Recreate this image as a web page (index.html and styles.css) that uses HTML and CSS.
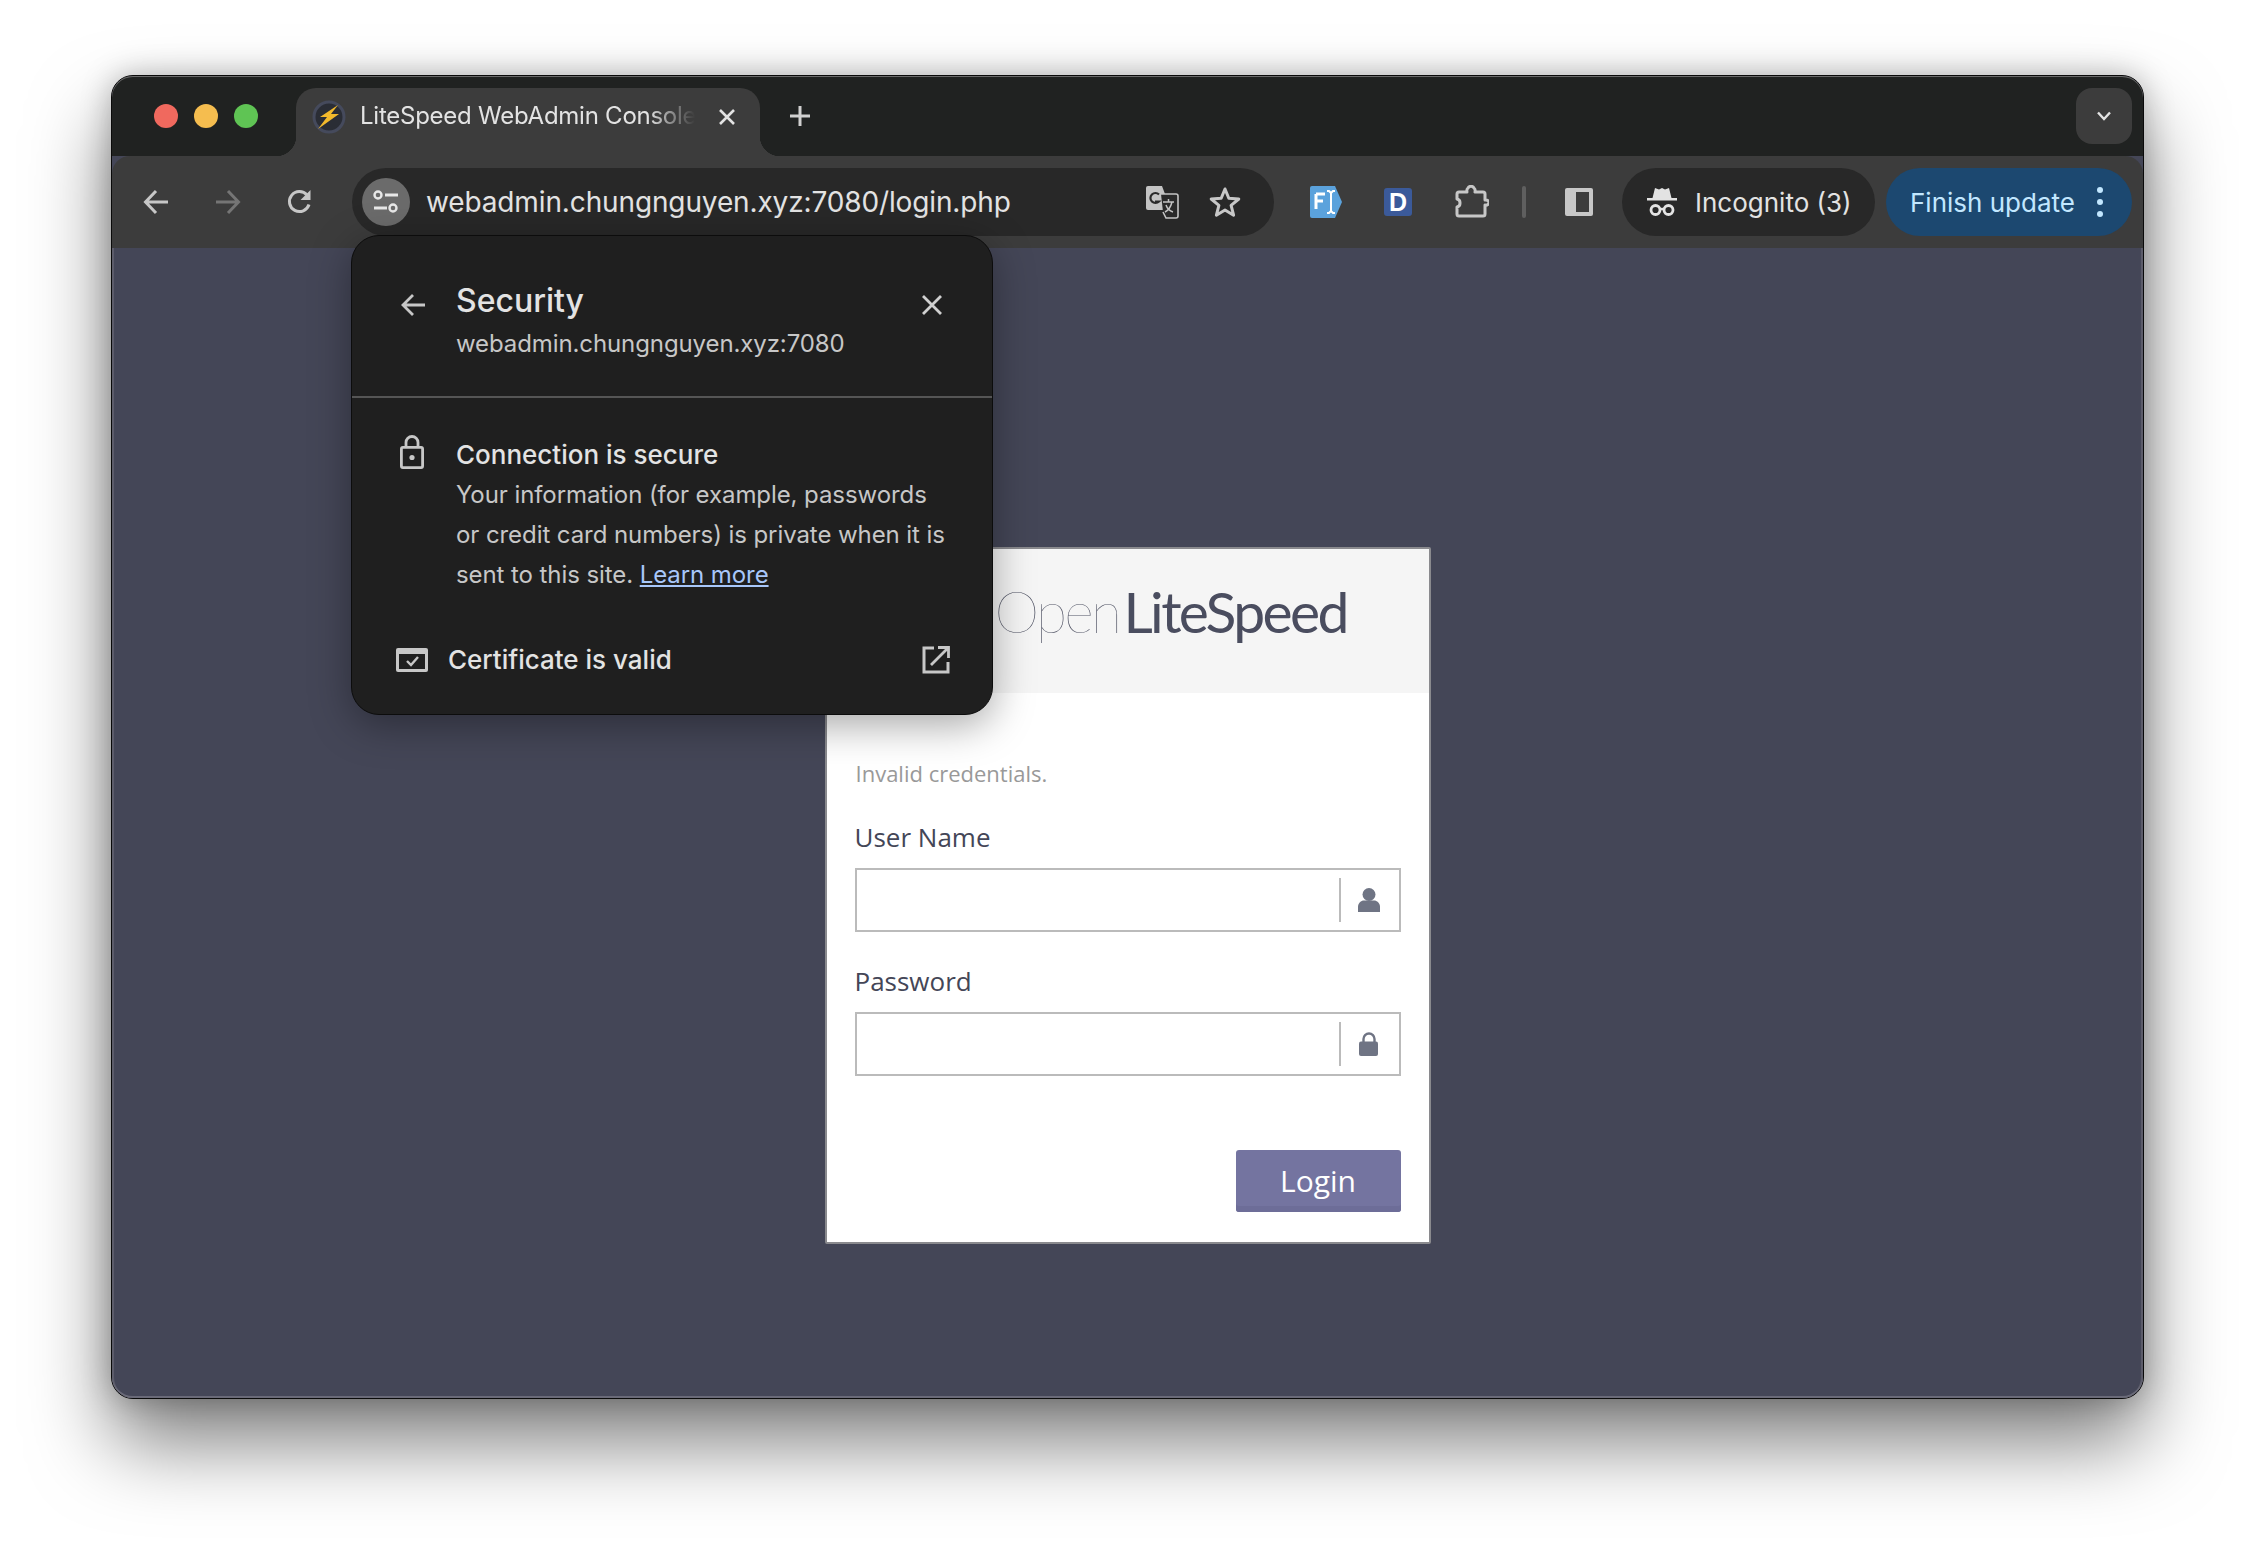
FILE: index.html
```html
<!DOCTYPE html>
<html lang="en">
<head>
<meta charset="utf-8">
<title>LiteSpeed WebAdmin Console</title>
<link rel="stylesheet" href="styles.css">
</head>
<body>
<div class="window">
  <header class="titlebar">
    <div class="lights"><span class="light red"></span><span class="light yellow"></span><span class="light green"></span></div>
    <div class="tab">
      <svg class="favicon" viewBox="0 0 34 34"><circle cx="17" cy="17" r="15" fill="#2a2d35" stroke="#454a5c" stroke-width="3"/><path d="M26 5 8 17h7L6 29l21-15h-8z" fill="#f2b92c"/></svg>
      <span class="tab-title">LiteSpeed WebAdmin Console</span>
      <svg class="tab-close" viewBox="0 0 18 18"><path d="M2 2l14 14M16 2 2 16" stroke="#e3e3e3" stroke-width="2.6" fill="none"/></svg>
    </div>
    <svg class="new-tab" viewBox="0 0 22 22"><path d="M11 1v20M1 11h20" stroke="#d0d0d0" stroke-width="3" fill="none"/></svg>
    <div class="tab-search"><svg viewBox="0 0 16 10" class="chev"><path d="M2 1.500l6 6.500 6-6.500" stroke="#e3e3e3" stroke-width="2.400" fill="none"/></svg></div>
  </header>
  <nav class="toolbar">
    <button class="tool first"><svg viewBox="0 0 26 26"><path d="M25 13H3M13 2 2.500 13 13 24" stroke="#c7c7c7" stroke-width="3" fill="none"/></svg></button>
    <button class="tool"><svg viewBox="0 0 26 26"><path d="M1 13h22M13 2l10.500 11L13 24" stroke="#757575" stroke-width="3" fill="none"/></svg></button>
    <button class="tool"><svg viewBox="0 0 26 26"><path d="M22 15.500A10 10 0 1 1 20 6" stroke="#c7c7c7" stroke-width="3" fill="none"/><path d="M23.500 1v10h-10z" fill="#c7c7c7"/></svg></button>
    <div class="omnibox">
      <span class="site-btn"><svg viewBox="0 0 28 28"><circle cx="6" cy="7" r="3.500" fill="none" stroke="#e8e8e8" stroke-width="2.400"/><path d="M13 7h13M2 20h13" stroke="#e8e8e8" stroke-width="3" fill="none"/><circle cx="21" cy="20" r="3.500" fill="none" stroke="#e8e8e8" stroke-width="2.400"/></svg></span>
      <span class="url">webadmin.chungnguyen.xyz:7080/login.php</span>
      <svg class="translate" viewBox="0 0 34 34"><path d="M3 1h14l9 24H3a2 2 0 0 1-2-2V3a2 2 0 0 1 2-2z" fill="#c4c4c4"/><path d="M16 9h15a2 2 0 0 1 2 2v20a2 2 0 0 1-2 2H21l-3-6" fill="#2a2a2a" stroke="#c4c4c4" stroke-width="1.600"/><path d="M18 17h11M23.500 14v3M20 27c4-2 6-6 7-10M21 20c1 3 4 6 7 7" stroke="#c4c4c4" stroke-width="1.500" fill="none"/><path d="M14 9.500a5 5 0 1 0 0 7h-4" stroke="#2a2a2a" stroke-width="2.200" fill="none"/></svg>
      <svg class="star" viewBox="0 0 34 34"><path d="M17 4l3.800 9.300 10 .7-7.700 6.400 2.500 9.800L17 25l-8.600 5.200 2.500-9.800L3.200 14l10-.7z" fill="none" stroke="#c7c7c7" stroke-width="3" stroke-linejoin="round"/></svg>
    </div>
    <button class="tool ext-first"><svg class="ext-fi" viewBox="0 0 32 32"><path d="M2 0h23l7 16-7 16H2a2 2 0 0 1-2-2V2a2 2 0 0 1 2-2z" fill="#5ba2dc"/><path d="M6 8h9M6 8v15M6 15h7" stroke="#fff" stroke-width="3" fill="none"/><path d="M17 5h2l2 2 2-2h2M21 7v18M17 27h2l2-2 2 2h2" stroke="#fff" stroke-width="2" fill="none"/></svg></button>
    <button class="tool"><span class="ext-d">D</span></button>
    <button class="tool ext-puzzle"><svg class="puzzle" viewBox="0 0 34 34"><path d="M4 7h8a4 4 0 0 1 1-4 3.500 3.500 0 0 1 6 0 4 4 0 0 1 1 4h8a2 2 0 0 1 2 2v6a4 4 0 0 1 4 2 3 3 0 0 1-4 3v9a2 2 0 0 1-2 2H4a2 2 0 0 1-2-2v-7a4 4 0 0 0 3-4 4 4 0 0 0-3-4V9a2 2 0 0 1 2-2z" fill="none" stroke="#c7c7c7" stroke-width="3" stroke-linejoin="round"/></svg></button>
    <span class="tool-sep"></span>
    <button class="tool"><svg class="sidepanel" viewBox="0 0 28 28"><path d="M2 0h24a2 2 0 0 1 2 2v24a2 2 0 0 1-2 2H2a2 2 0 0 1-2-2V2a2 2 0 0 1 2-2z" fill="#c7c7c7"/><rect x="11" y="4" width="13" height="20" fill="#3c3c3c"/></svg></button>
    <div class="incognito">
      <svg viewBox="0 0 32 30"><path d="M9 1l4 1.500L16 1l3 1.500L23 1l2.500 10H31v2.500H1V11h5.500z" fill="#e3e3e3"/><circle cx="9.500" cy="23" r="4.500" fill="none" stroke="#e3e3e3" stroke-width="2.800"/><circle cx="22.500" cy="23" r="4.500" fill="none" stroke="#e3e3e3" stroke-width="2.800"/><path d="M14 22h4" stroke="#e3e3e3" stroke-width="2.400"/></svg>
      <span>Incognito (3)</span>
    </div>
    <div class="finish"><span>Finish update</span><span class="dots"><i></i><i></i><i></i></span></div>
  </nav>
  <main class="content">
    <section class="card">
      <div class="card-head"><span class="logo"><span class="logo-open">Open</span>LiteSpeed</span></div>
      <form class="card-body">
        <p class="error">Invalid credentials.</p>
        <div class="field">
          <label class="label">User Name</label>
          <div class="input">
            <span class="addon"><svg viewBox="0 0 22 24"><circle cx="11" cy="6.500" r="6.500" fill="#6f7484"/><path d="M0 24v-5c0-4 3-6.500 6-6.500h10c3 0 6 2.500 6 6.500v5z" fill="#6f7484"/></svg></span>
          </div>
        </div>
        <div class="field">
          <label class="label">Password</label>
          <div class="input">
            <span class="addon"><svg viewBox="0 0 20 24"><path d="M4.500 10V7a5.500 5.500 0 0 1 11 0v3" fill="none" stroke="#6f7484" stroke-width="2.400"/><rect y="9.500" width="19" height="14.500" rx="2" fill="#6f7484"/></svg></span>
          </div>
        </div>
        <div class="actions"><button type="button" class="login">Login</button></div>
      </form>
    </section>
  </main>
  <aside class="popup">
    <div class="pop-head">
      <svg class="pop-back" viewBox="0 0 26 26"><path d="M25 13H3M13 3 3 13l10 10" stroke="#c7c7c7" stroke-width="2.800" fill="none"/></svg>
      <div class="pop-titles">
        <div class="pop-title">Security</div>
        <div class="pop-host">webadmin.chungnguyen.xyz:7080</div>
      </div>
      <svg class="pop-close" viewBox="0 0 22 22"><path d="M2 2l18 18M20 2 2 20" stroke="#d0d0d0" stroke-width="2.800" fill="none"/></svg>
    </div>
    <div class="pop-body">
      <div class="pop-conn">
        <svg class="pop-lock" viewBox="0 0 24 34"><path d="M6 13V7.500a6 6 0 0 1 12 0V13" fill="none" stroke="#c7c7c7" stroke-width="2.800"/><rect x="1.400" y="12.400" width="21.200" height="20.200" rx="1.500" fill="none" stroke="#c7c7c7" stroke-width="2.800"/><circle cx="12" cy="22.500" r="2.600" fill="#c7c7c7"/></svg>
        <div>
          <div class="conn-title">Connection is secure</div>
          <p class="conn-text">Your information (for example, passwords or credit card numbers) is private when it is sent to this site. <a class="learn">Learn more</a></p>
        </div>
      </div>
      <div class="pop-cert">
        <svg class="cert-icon" viewBox="0 0 32 24"><path d="M2 0h28a2 2 0 0 1 2 2v20a2 2 0 0 1-2 2H2a2 2 0 0 1-2-2V2a2 2 0 0 1 2-2z" fill="#c7c7c7"/><rect x="3" y="6" width="26" height="15" fill="#1f1f1f"/><path d="M11 13l4 4 7-8" stroke="#c7c7c7" stroke-width="2.400" fill="none"/></svg>
        <span class="cert-text">Certificate is valid</span>
        <svg class="cert-open" viewBox="0 0 28 28"><path d="M12 2H2v24h24V16" fill="none" stroke="#c7c7c7" stroke-width="3"/><path d="M16 1.500h10.500V12M26 2 9 19" fill="none" stroke="#c7c7c7" stroke-width="2.800"/></svg>
      </div>
    </div>
  </aside>
</div>
</body>
</html>
```

FILE: styles.css
```css
* { box-sizing: border-box; }
html, body { margin: 0; height: 100%; }
body {
  background: #fff;
  padding: 75px 0 0 111px;
  font-family: Inter, "Liberation Sans", sans-serif;
  overflow: hidden;
}
.window {
  position: relative;
  width: 2033px;
  height: 1324px;
  display: flex;
  flex-direction: column;
  background: #444657;
  border: 1px solid #0a0a0a;
  border-radius: 22px;
  overflow: visible;
  box-shadow: 0 44px 80px rgba(0,0,0,.5), 0 0 30px rgba(0,0,0,.25);
}
.titlebar {
  height: 80px;
  display: flex;
  align-items: flex-start;
  background: #202221;
  border-radius: 21px 21px 0 0;
  box-shadow: inset 0 1px 0 #6a6a6a;
  flex: none;
}
.lights { display: flex; gap: 16px; margin: 28px 0 0 42px; }
.light { width: 24px; height: 24px; border-radius: 50%; }
.red { background: #f0695e; }
.yellow { background: #f5bd4f; }
.green { background: #5fc454; }
.tab {
  position: relative;
  margin: 12px 0 0 38px;
  width: 464px;
  height: 68px;
  background: #3c3c3c;
  border-radius: 20px 20px 0 0;
  display: flex;
  align-items: flex-start;
  padding: 12px 0 0 16px;
}
.tab::before, .tab::after {
  content: "";
  position: absolute;
  bottom: 0;
  width: 20px;
  height: 20px;
}
.tab::before { left: -20px; background: radial-gradient(circle at 0 0, #202221 20px, #3c3c3c 20.500px); }
.tab::after { right: -20px; background: radial-gradient(circle at 100% 0, #202221 20px, #3c3c3c 20.500px); }
.favicon { width: 34px; height: 34px; flex: none; }
.tab-title {
  margin: 1px 0 0 14px;
  width: 335px;
  font-size: 24px;
  letter-spacing: -.25px;
  line-height: 30px;
  color: #e3e3e3;
  white-space: nowrap;
  overflow: hidden;
  -webkit-mask-image: linear-gradient(90deg, #000 86%, transparent 100%);
  mask-image: linear-gradient(90deg, #000 86%, transparent 100%);
}
.tab-close { width: 18px; height: 18px; margin: 8px 0 0 23px; flex: none; }
.new-tab { width: 22px; height: 22px; margin: 29px 0 0 29px; flex: none; }
.tab-search {
  margin: 12px 11px 0 auto;
  width: 56px;
  height: 56px;
  border-radius: 16px;
  background: #3c3c3c;
  display: flex;
  align-items: center;
  justify-content: center;
}
.chev { width: 16px; height: 10px; }
.toolbar {
  height: 92px;
  display: flex;
  align-items: center;
  background: #3c3c3c;
  border-radius: 18px 18px 0 0;
  flex: none;
  padding-left: 8px;
}
.tool {
  width: 72px;
  height: 68px;
  padding: 0;
  border: 0;
  background: none;
  display: flex;
  align-items: center;
  justify-content: center;
  flex: none;
}
.tool svg { width: 26px; height: 26px; }
.omnibox {
  margin-left: 16px;
  width: 922px;
  height: 68px;
  border-radius: 34px;
  background: #282828;
  display: flex;
  align-items: center;
  padding-left: 10px;
  flex: none;
}
.site-btn {
  width: 48px;
  height: 48px;
  border-radius: 50%;
  background: #6b6b6b;
  display: flex;
  align-items: center;
  justify-content: center;
  flex: none;
}
.site-btn svg { width: 28px; height: 28px; }
.url { margin-left: 16px; font-size: 28px; letter-spacing: -.13px; color: #e3e3e3; white-space: nowrap; width: 719px; }
.translate { width: 34px; height: 34px; flex: none; }
.star { width: 34px; height: 34px; margin-left: 29px; flex: none; }
.ext-first { margin-left: 16px; }
.ext-puzzle { margin-left: 2px; }
.tool svg.ext-fi { width: 32px; height: 32px; }
.ext-d {
  width: 28px;
  height: 28px;
  border-radius: 3px;
  background: #3b5a9a;
  color: #fff;
  font: 700 25px/28px "Liberation Sans", sans-serif;
  text-align: center;
}
.tool svg.puzzle { width: 34px; height: 34px; }
.tool-sep { width: 4px; height: 32px; margin: 0 17px 0 14px; background: #5f5f5f; border-radius: 2px; flex: none; }
.tool svg.sidepanel { width: 28px; height: 28px; }
.incognito {
  margin-left: 7px;
  width: 253px;
  height: 68px;
  border-radius: 34px;
  background: #282828;
  display: flex;
  align-items: center;
  padding-left: 24px;
  color: #e3e3e3;
  font-size: 26px;
  white-space: nowrap;
  flex: none;
}
.incognito svg { width: 32px; height: 30px; margin-right: 17px; flex: none; }
.finish {
  margin-left: 11px;
  width: 246px;
  height: 68px;
  border-radius: 34px;
  background: #1c4870;
  display: flex;
  align-items: center;
  padding-left: 24px;
  color: #c2e7ff;
  font-size: 26px;
  white-space: nowrap;
  flex: none;
}
.dots { display: flex; flex-direction: column; gap: 6px; margin-left: auto; margin-right: 29px; }
.dots i { display: block; width: 6px; height: 6px; border-radius: 50%; background: #c2e7ff; }
.content {
  flex: 1;
  display: flex;
  justify-content: center;
  align-items: flex-start;
  padding-top: 299px;
  border-radius: 0 0 21px 21px;
  box-shadow: inset 0 -2px 0 #6a6a78, inset 2px 0 0 #5c5c6a, inset -2px 0 0 #5c5c6a;
  font-family: "Open Sans", sans-serif;
}
.card {
  width: 606px;
  height: 697px;
  background: #fff;
  border: 2px solid #8a8a8e;
  border-radius: 2px;
}
.card-head {
  height: 144px;
  background: #f5f5f5;
  display: flex;
  align-items: center;
  padding-left: 168px;
}
.logo {
  font-family: Lato, sans-serif;
  font-weight: 400;
  font-size: 57px;
  letter-spacing: -2.6px;
  line-height: 1;
  color: #4a4d5f;
  white-space: nowrap;
  margin-top: -20px;
}
.logo-open { color: #4f5263; font-weight: 100; margin-right: 4px; }
.card-body { padding: 65px 28px 0 28px; }
.error { margin: 0 0 34px 1px; font-size: 22px; line-height: 30px; color: #999; }
.field { margin-bottom: 34px; }
.label { display: block; height: 30px; margin-bottom: 16px; font-size: 26px; line-height: 30px; color: #444657; }
.input {
  height: 64px;
  border: 2px solid #bbb;
  display: flex;
  justify-content: flex-end;
  align-items: center;
}
.addon {
  width: 60px;
  height: 44px;
  border-left: 2px solid #bbb;
  display: flex;
  align-items: center;
  justify-content: center;
  padding-right: 2px;
}
.addon svg { width: 22px; height: 24px; }
.actions { display: flex; justify-content: flex-end; margin-top: 74px; }
.login {
  width: 165px;
  height: 62px;
  border: 0;
  border-radius: 3px;
  background: #7474a0;
  box-shadow: inset 0 -6px 0 #6d6d98;
  color: #fff;
  font: 400 30px/1 "Open Sans", sans-serif;
  padding: 0;
}
.popup {
  position: absolute;
  left: 239px;
  top: 159px;
  width: 642px;
  height: 480px;
  background: #1f1f1f;
  border: 1px solid #0c0c0c;
  border-radius: 28px;
  box-shadow: 0 10px 40px rgba(0,0,0,.35);
  color: #e3e3e3;
}
.pop-head {
  height: 162px;
  border-bottom: 2px solid #555;
  display: flex;
  align-items: flex-start;
  padding: 45px 0 0 48px;
}
.pop-back { width: 26px; height: 26px; margin: 11px 30px 0 0; flex: none; }
.pop-titles { width: 446px; flex: none; }
.pop-title { font-size: 32px; line-height: 40px; font-weight: 500; }
.pop-host { font-size: 24px; letter-spacing: -.1px; line-height: 36px; margin-top: 5px; color: #c7c7c7; white-space: nowrap; }
.pop-close { width: 22px; height: 22px; margin: 13px 0 0 19px; flex: none; }
.pop-body { padding-top: 37px; }
.pop-conn { display: flex; padding-left: 48px; }
.pop-lock { width: 24px; height: 34px; margin-right: 32px; flex: none; }
.conn-title { font-size: 26px; line-height: 40px; font-weight: 500; }
.conn-text { margin: 0; width: 498px; font-size: 24px; letter-spacing: -.08px; line-height: 40px; color: #c7c7c7; }
.learn { color: #a8c7fa; text-decoration: underline; }
.pop-cert { display: flex; align-items: center; margin-top: 49px; padding-left: 44px; }
.cert-icon { width: 32px; height: 24px; margin-right: 20px; flex: none; }
.cert-text { font-size: 26px; font-weight: 500; width: 474px; }
.cert-open { width: 28px; height: 28px; flex: none; }
```
